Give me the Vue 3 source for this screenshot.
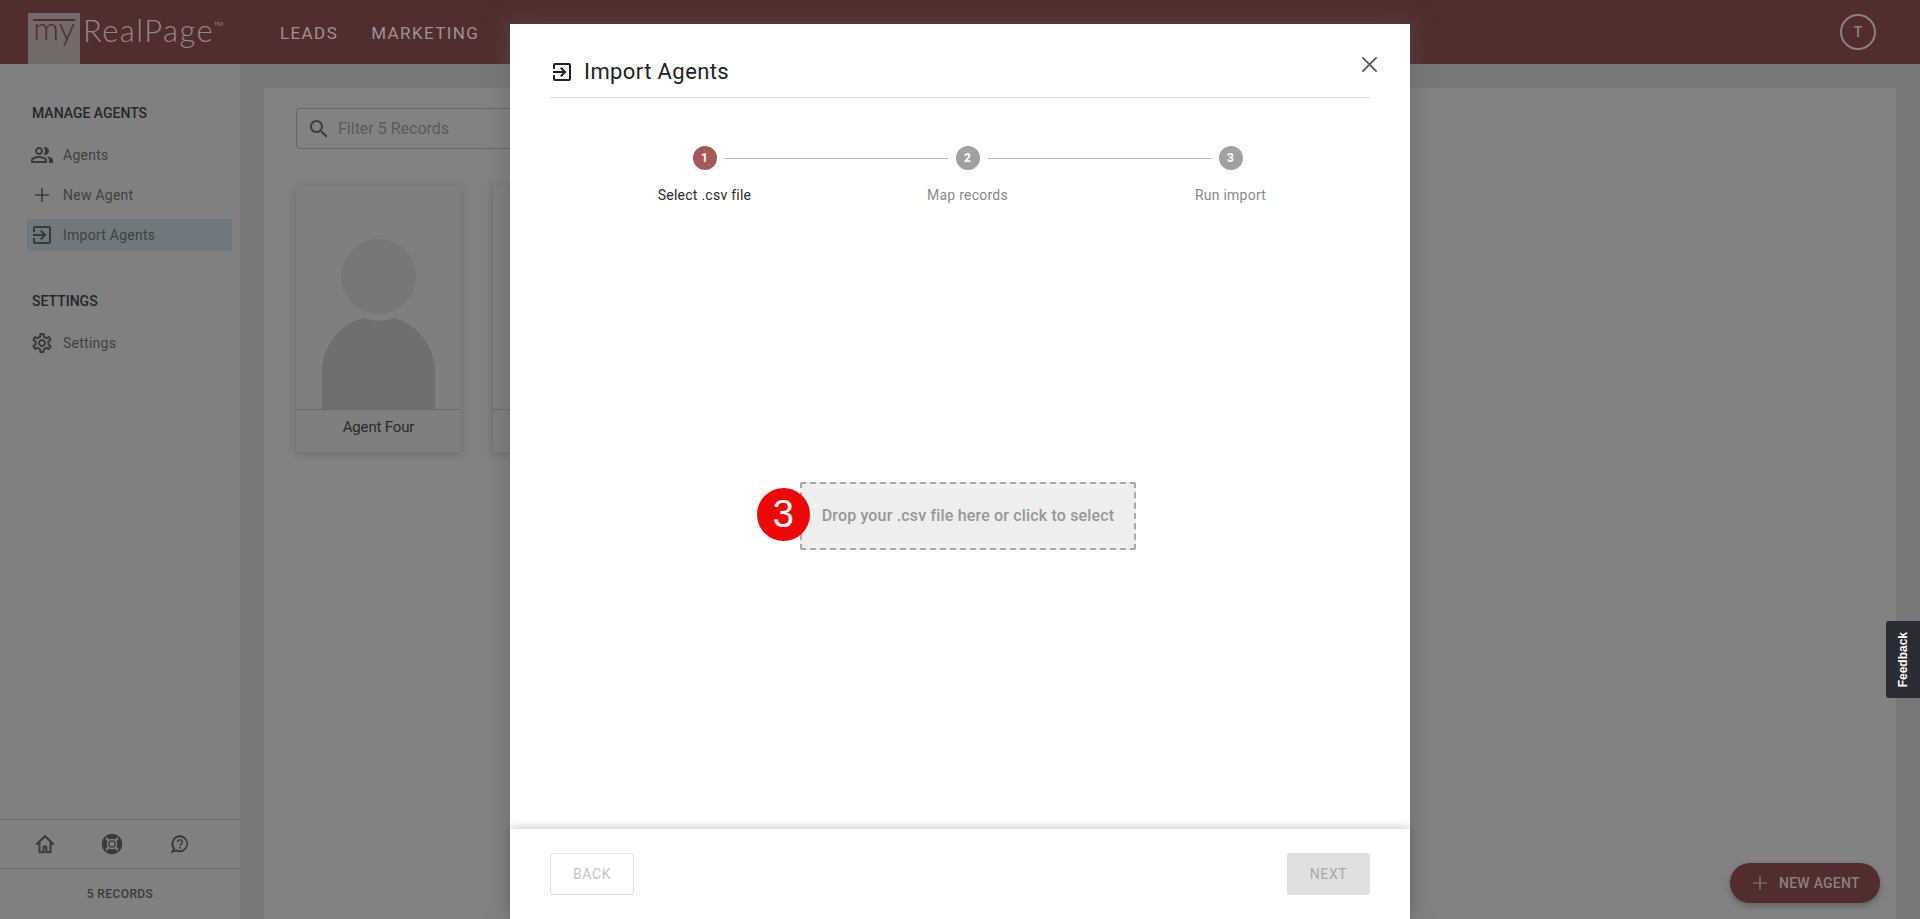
<template>
  <div class="page">
    <header class="topbar">
      <div class="logo">
        <div class="logo-my"><span>my</span></div>
        <span class="logo-name">RealPage</span><span class="logo-tm">TM</span>
      </div>
      <nav class="topnav">
        <a v-for="item in topNav" :key="item">{{ item }}</a>
      </nav>
      <div class="user">T</div>
    </header>

    <div class="shell">
      <aside class="sidebar">
        <div class="side-scroll">
          <h4>MANAGE AGENTS</h4>
          <ul>
            <li v-for="item in manageLinks" :key="item.label" :class="{ active: item.active }">
              <svg viewBox="0 0 24 24" class="side-icon"><path :d="item.icon" /></svg>
              <span>{{ item.label }}</span>
            </li>
          </ul>
          <h4 class="second">SETTINGS</h4>
          <ul>
            <li>
              <svg viewBox="0 0 24 24" class="side-icon"><path :d="gearPath" /></svg>
              <span>Settings</span>
            </li>
          </ul>
        </div>
        <div class="side-tools">
          <svg viewBox="0 0 24 24" class="tool">
            <path d="M2.500 12.500 12 3.500l9.500 9M6 10.500V21h4.500v-5a1.500 1.500 0 0 1 3 0v5H18V10.500" fill="none" stroke="#3a3a3a" stroke-width="2.200" />
          </svg>
          <svg viewBox="0 0 24 24" class="tool">
            <circle cx="12" cy="12" r="8.500" fill="none" stroke="#3a3a3a" stroke-width="5.500" />
            <circle cx="12" cy="12" r="5.500" fill="#808080" />
            <circle cx="12" cy="12" r="3.500" fill="none" stroke="#3a3a3a" stroke-width="1.400" />
            <path d="M5.500 5.500l3 3M18.500 5.500l-3 3M5.500 18.500l3-3M18.500 18.500l-3-3" stroke="#808080" stroke-width="2.400" />
          </svg>
          <svg viewBox="0 0 24 24" class="tool">
            <path d="M13 2.500a9.300 9.300 0 0 0-7.600 14.600L2.500 22l6.300-1.700A9.300 9.300 0 1 0 13 2.500zm0 2.200a7.100 7.100 0 1 1-3.500 13.300l-2.400.7.900-1.900A7.100 7.100 0 0 1 13 4.700z" />
            <path d="M10.500 10a2.500 2.500 0 1 1 3.800 2.100c-.8.5-1.300 1-1.300 1.900" fill="none" stroke="#3a3a3a" stroke-width="1.700" />
            <circle cx="13" cy="16.200" r="1.100" />
          </svg>
        </div>
        <div class="side-count">5 RECORDS</div>
      </aside>

      <main class="panel">
        <div class="filter">
          <svg viewBox="0 0 24 24" class="filter-icon"><path d="M15.500 14h-.79l-.28-.27C15.410 12.590 16 11.110 16 9.500 16 5.910 13.090 3 9.500 3S3 5.910 3 9.500 5.910 16 9.500 16c1.610 0 3.090-.59 4.230-1.570l.27.28v.79l5 4.990L20.490 19l-4.990-5zm-6 0C7.010 14 5 11.990 5 9.500S7.010 5 9.500 5 14 7.010 14 9.500 11.990 14 9.500 14z" /></svg>
          <span>Filter 5 Records</span>
        </div>
        <div class="cards">
          <div v-for="agent in agents" :key="agent" class="card">
            <div class="card-photo">
              <div class="head"></div>
              <div class="body"></div>
            </div>
            <div class="card-name">{{ agent }}</div>
          </div>
        </div>
      </main>
    </div>

    <button class="fab">
      <svg viewBox="0 0 24 24"><path d="M12 4v16M4 12h16" /></svg>
      NEW AGENT
    </button>

    <div class="modal-layer">
      <section class="modal">
        <div class="modal-head">
          <svg viewBox="0 0 24 24"><path :d="importPath" /></svg>
          <h2>Import Agents</h2>
          <svg viewBox="0 0 24 24" class="close"><path d="M3 3l18 18M21 3 3 21" /></svg>
        </div>

        <ol class="steps">
          <li v-for="(step, index) in steps" :key="step" :class="{ current: index === 0 }">
            <span class="dot">{{ index + 1 }}</span>
            <span class="step-label">{{ step }}</span>
          </li>
        </ol>

        <div class="modal-body">
          <div class="drop">
            <span class="marker">3</span>
            Drop your .csv file here or click to select
          </div>
        </div>

        <footer class="modal-foot">
          <button class="btn back">BACK</button>
          <button class="btn next">NEXT</button>
        </footer>
      </section>
    </div>

    <div class="feedback"><span>Feedback</span></div>
  </div>
</template>

<script setup>
const importPath = 'M10.090 15.590 11.500 17l5-5-5-5-1.410 1.410L12.670 11H3v2h9.670l-2.580 2.590zM19 3H5c-1.110 0-2 .9-2 2v4h2V5h14v14H5v-4H3v4c0 1.100.89 2 2 2h14c1.100 0 2-.9 2-2V5c0-1.100-.9-2-2-2z'
const gearPath = 'M19.430 12.980c.04-.32.07-.64.07-.98 0-.34-.03-.66-.07-.98l2.110-1.650c.19-.15.24-.42.12-.64l-2-3.460c-.09-.16-.26-.25-.44-.25-.06 0-.12.01-.17.03l-2.490 1c-.52-.4-1.080-.73-1.690-.98l-.38-2.650C14.460 2.180 14.250 2 14 2h-4c-.25 0-.46.18-.49.42l-.38 2.650c-.61.25-1.170.59-1.690.98l-2.490-1c-.06-.02-.12-.03-.18-.03-.17 0-.34.09-.43.25l-2 3.460c-.13.22-.07.49.12.64l2.110 1.650c-.04.32-.07.65-.07.98 0 .33.03.66.07.98l-2.110 1.650c-.19.15-.24.42-.12.64l2 3.460c.09.16.26.25.44.25.06 0 .12-.01.17-.03l2.490-1c.52.4 1.080.73 1.690.98l.38 2.650c.03.24.24.42.49.42h4c.25 0 .46-.18.49-.42l.38-2.650c.61-.25 1.170-.59 1.690-.98l2.490 1c.06.02.12.03.18.03.17 0 .34-.09.43-.25l2-3.460c.12-.22.07-.49-.12-.64l-2.110-1.650zm-1.980-1.710c.04.31.05.52.05.73 0 .21-.02.43-.05.73l-.14 1.130.89.7 1.080.84-.7 1.210-1.270-.51-1.040-.42-.9.68c-.43.32-.84.56-1.250.73l-1.060.43-.16 1.130-.2 1.350h-1.400l-.19-1.350-.16-1.130-1.060-.43c-.43-.18-.83-.41-1.230-.71l-.91-.7-1.060.43-1.270.51-.7-1.210 1.080-.84.89-.7-.14-1.130c-.03-.31-.05-.54-.05-.74s.02-.43.05-.73l.14-1.130-.89-.7-1.080-.84.7-1.210 1.270.51 1.040.42.9-.68c.43-.32.84-.56 1.250-.73l1.060-.43.16-1.130.2-1.350h1.390l.19 1.350.16 1.130 1.060.43c.43.18.83.41 1.230.71l.91.7 1.060-.43 1.270-.51.7 1.210-1.070.85-.89.7.14 1.130zM12 8c-2.210 0-4 1.790-4 4s1.790 4 4 4 4-1.790 4-4-1.790-4-4-4zm0 6c-1.100 0-2-.9-2-2s.9-2 2-2 2 .9 2 2-.9 2-2 2z'

const topNav = ['LEADS', 'MARKETING']

const manageLinks = [
  {
    label: 'Agents',
    icon: 'M16.670 13.130C18.040 14.060 19 15.320 19 17v3h4v-3c0-2.180-3.570-3.470-6.330-3.870zM15 12c2.210 0 4-1.790 4-4s-1.790-4-4-4c-.47 0-.91.1-1.330.24C14.500 5.270 15 6.580 15 8s-.5 2.730-1.330 3.760c.42.14.86.24 1.330.24zM9 12c2.210 0 4-1.790 4-4s-1.790-4-4-4-4 1.790-4 4 1.790 4 4 4zm0-6c1.100 0 2 .9 2 2s-.9 2-2 2-2-.9-2-2 .9-2 2-2zM9 13c-2.670 0-8 1.340-8 4v3h16v-3c0-2.660-5.330-4-8-4zm6 5H3v-.99C3.200 16.290 6.300 15 9 15s5.800 1.290 6 2z'
  },
  { label: 'New Agent', icon: 'M19 12.800h-6.200V19h-1.600v-6.200H5v-1.600h6.200V5h1.600v6.200H19z' },
  { label: 'Import Agents', icon: importPath, active: true }
]

const agents = ['Agent Four', 'Agent One', 'Agent Three', 'Agent Two', 'Agent Five']
const steps = ['Select .csv file', 'Map records', 'Run import']
</script>

<style>
html,
body {
  overflow: hidden;
}
</style>

<style scoped>
.page {
  position: relative;
  height: 919px;
  overflow: hidden;
  display: flex;
  flex-direction: column;
  background: #77787a;
  font-family: Roboto, "Liberation Sans", sans-serif;
}

/* top bar */
.topbar {
  height: 64px;
  flex: none;
  display: flex;
  align-items: center;
  background: #522d2d;
  padding: 0 44px 0 28px;
}

.logo {
  display: flex;
  align-self: flex-start;
  width: 252px;
  font-family: Lato, sans-serif;
  color: #8f8a8a;
}

.logo-my {
  width: 52px;
  height: 51px;
  margin-top: 13px;
  background: #756a6a;
  color: #522d2d;
  font-size: 32px;
  line-height: 36px;
  text-align: center;
  position: relative;
}

.logo-my::before {
  content: "";
  position: absolute;
  left: 5px;
  right: 5px;
  top: 6px;
  height: 2px;
  background: #522d2d;
}

.logo-my span {
  position: relative;
  top: -3px;
  font-weight: 300;
}

.logo-name {
  font-size: 31px;
  font-weight: 300;
  letter-spacing: 1.4px;
  line-height: 38px;
  margin: 11px 0 0 3px;
}

.logo-tm {
  font-size: 6px;
  margin: 20px 0 0 0;
}

.topnav {
  display: flex;
  gap: 33px;
  padding-top: 1px;
}

.topnav a {
  font-size: 17px;
  letter-spacing: 1.4px;
  color: #9c9494;
}

.user {
  margin-left: auto;
  width: 36px;
  height: 36px;
  box-sizing: border-box;
  border: 2px solid #8d8282;
  border-radius: 50%;
  color: #8d8282;
  font-size: 14px;
  font-weight: 500;
  display: flex;
  align-items: center;
  justify-content: center;
}

/* sidebar */
.shell {
  flex: 1;
  display: flex;
  min-height: 0;
}

.sidebar {
  width: 240px;
  flex: none;
  display: flex;
  flex-direction: column;
  background: #808080;
}

.side-scroll {
  flex: 1;
  padding: 41px 8px 0 27px;
}

.sidebar h4 {
  margin: 0 0 18px 5px;
  font-size: 14px;
  line-height: 16px;
  font-weight: 500;
  color: #26262c;
}

.sidebar h4.second {
  margin-top: 42px;
}

.sidebar ul {
  list-style: none;
  margin: 0;
  padding: 0;
}

.sidebar li {
  height: 32px;
  margin-bottom: 8px;
  padding-left: 3px;
  display: flex;
  align-items: center;
  gap: 9px;
  font-size: 14px;
  letter-spacing: 0.25px;
  color: #404040;
}

.sidebar li.active {
  background: #6f797d;
}

.side-icon {
  width: 24px;
  height: 24px;
  fill: #3a3a3a;
}

.side-tools {
  height: 48px;
  padding-right: 16px;
  border-top: 1px solid #6e6e6e;
  border-bottom: 1px solid #6e6e6e;
  display: flex;
  align-items: center;
  justify-content: center;
  gap: 45px;
}

.tool {
  width: 22px;
  height: 22px;
  fill: #3a3a3a;
}

.side-count {
  height: 50px;
  display: flex;
  align-items: center;
  justify-content: center;
  font-size: 12px;
  font-weight: 500;
  letter-spacing: 0.4px;
  color: #3a3a3a;
}

/* cards panel */
.panel {
  flex: 1;
  margin: 24px 24px 0;
  padding: 20px 32px 0;
  background: #828282;
}

.filter {
  width: 440px;
  height: 41px;
  box-sizing: border-box;
  border: 1px solid #666;
  border-radius: 4px;
  padding-left: 10px;
  display: flex;
  align-items: center;
  gap: 7px;
  font-size: 16px;
  color: #5a5a5a;
}

.filter-icon {
  width: 24px;
  height: 24px;
  fill: #3d3d3d;
}

.cards {
  display: flex;
  gap: 32px;
  margin-top: 36px;
}

.card {
  width: 165px;
  height: 267px;
  border-radius: 4px;
  overflow: hidden;
  background: #7f7f7f;
  box-shadow: 0 2px 8px rgba(0, 0, 0, 0.18);
}

.card-photo {
  height: 225px;
  box-sizing: border-box;
  border-bottom: 1px solid #6c6c6c;
  display: flex;
  flex-direction: column;
  align-items: center;
  padding-top: 54px;
}

.head {
  position: relative;
  z-index: 1;
  width: 75px;
  height: 75px;
  flex: none;
  border-radius: 50%;
  background: #777;
  box-shadow: 0 0 0 7px #7f7f7f;
}

.body {
  width: 113px;
  flex: 1;
  margin-top: 2px;
  border-radius: 56px 56px 0 0;
  background: #6f6f6f;
}

.card-name {
  height: 42px;
  padding-bottom: 8px;
  box-sizing: border-box;
  display: flex;
  align-items: center;
  justify-content: center;
  font-size: 15px;
  letter-spacing: -0.15px;
  color: #2b2b2b;
}

.fab {
  position: absolute;
  left: 1730px;
  top: 863px;
  width: 150px;
  height: 40px;
  border: 0;
  border-radius: 20px;
  padding: 0 0 0 20px;
  display: flex;
  align-items: center;
  gap: 9px;
  background: #522d2d;
  color: #8a8080;
  font-family: Roboto, sans-serif;
  font-size: 14px;
  font-weight: 500;
  letter-spacing: 0.25px;
  box-shadow: 0 3px 6px rgba(0, 0, 0, 0.25);
}

.fab svg {
  width: 20px;
  height: 20px;
  fill: none;
  stroke: #8a8080;
  stroke-width: 1.400;
}

/* import dialog */
.modal-layer {
  position: absolute;
  inset: 0;
  z-index: 2;
  display: flex;
  justify-content: center;
  padding-top: 24px;
  box-sizing: border-box;
}

.modal {
  width: 900px;
  height: 895px;
  display: flex;
  flex-direction: column;
  background: #fff;
  box-shadow: 0 0 24px 2px rgba(90, 90, 90, 0.45);
}

.modal-head {
  margin: 0 40px;
  height: 74px;
  box-sizing: border-box;
  padding-top: 22px;
  border-bottom: 1px solid #d5dde3;
  display: flex;
  align-items: center;
  gap: 10px;
  position: relative;
}

.modal-head svg {
  width: 24px;
  height: 24px;
  fill: #222;
}

.modal-head h2 {
  margin: 0;
  font-size: 22px;
  font-weight: 400;
  letter-spacing: 0.4px;
  color: #222;
}

.modal-head .close {
  position: absolute;
  right: -9px;
  top: 31px;
  width: 19px;
  height: 19px;
  fill: none;
  stroke: #555;
  stroke-width: 2.200;
}

.steps {
  list-style: none;
  margin: 0 40px;
  padding: 48px 8px 0 23px;
  height: 104px;
  box-sizing: border-box;
  display: grid;
  grid-template-columns: repeat(3, 1fr);
}

.steps li {
  position: relative;
  display: flex;
  flex-direction: column;
  align-items: center;
  gap: 17px;
  font-size: 14px;
  letter-spacing: 0.25px;
  color: #8a8a8a;
}

.steps li:not(:first-child)::before {
  content: "";
  position: absolute;
  top: 12px;
  left: calc(-50% + 20px);
  right: calc(50% + 20px);
  height: 1px;
  background: #b4b4b4;
}

.steps li.current {
  color: #2b2b2b;
}

.dot {
  width: 24px;
  height: 24px;
  border-radius: 50%;
  background: #a0a0a0;
  color: #fff;
  font-size: 12px;
  font-weight: 700;
  display: flex;
  align-items: center;
  justify-content: center;
}

.current .dot {
  background: #a55a5a;
}

.modal-body {
  flex: 1;
  display: flex;
  align-items: center;
  justify-content: center;
  padding-left: 16px;
}

.drop {
  position: relative;
  width: 336px;
  height: 68px;
  box-sizing: border-box;
  border: 2px dashed #a8a8a8;
  border-radius: 2px;
  background: #eee;
  display: flex;
  align-items: center;
  justify-content: center;
  font-size: 16px;
  font-weight: 500;
  letter-spacing: 0.17px;
  color: #979797;
}

.marker {
  position: absolute;
  left: -45px;
  top: 4px;
  width: 53px;
  height: 53px;
  border-radius: 50%;
  background: #ec0808;
  color: #fff;
  font-family: "Liberation Sans", sans-serif;
  font-size: 38px;
  font-weight: 400;
  display: flex;
  align-items: center;
  justify-content: center;
}

.modal-foot {
  height: 90px;
  box-sizing: border-box;
  padding: 24px 40px;
  display: flex;
  justify-content: space-between;
  box-shadow: 0 -3px 8px rgba(0, 0, 0, 0.16);
}

.btn {
  width: 84px;
  height: 42px;
  box-sizing: border-box;
  border-radius: 3px;
  font-family: Roboto, sans-serif;
  font-size: 14px;
  letter-spacing: 0.6px;
}

.back {
  border: 1px solid #e0e0e0;
  background: #fff;
  color: #c4c4c4;
}

.next {
  width: 83px;
  border: 0;
  background: #e0e0e0;
  color: #a8a8a8;
}

.feedback {
  position: absolute;
  right: 0;
  top: 621px;
  z-index: 3;
  width: 34px;
  height: 77px;
  border-radius: 3px 0 0 3px;
  background: #292c35;
  display: flex;
  align-items: center;
  justify-content: center;
}

.feedback span {
  writing-mode: vertical-rl;
  transform: rotate(180deg);
  font-family: "Liberation Sans", sans-serif;
  font-size: 12px;
  font-weight: 700;
  color: #fff;
}
</style>
